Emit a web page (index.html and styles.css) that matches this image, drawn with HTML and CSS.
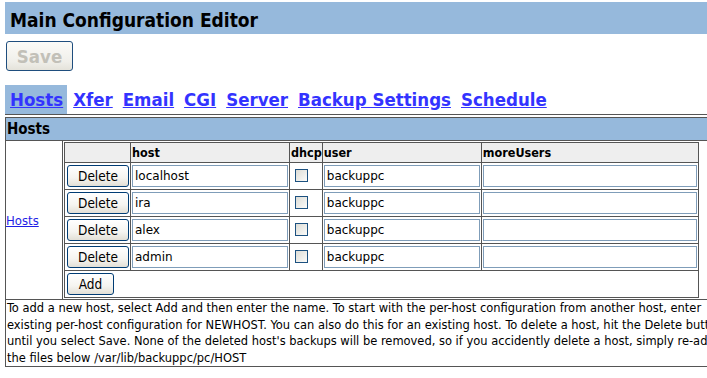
FILE: index.html
```html
<!DOCTYPE html>
<html>

<head>
  <title>Main Configuration Editor</title>
  <link rel="stylesheet" href="styles.css">
</head>

<body>
  <div class="page">
    <div class="h1">Main Configuration Editor</div>
    <form>
      <div class="save-row">
        <input type="button" class="save-btn" value="Save" disabled>
      </div>
      <div class="tabs">
        <a href="#" class="tab tab-sel">Hosts</a>
        <a href="#" class="tab">Xfer</a>
        <a href="#" class="tab">Email</a>
        <a href="#" class="tab">CGI</a>
        <a href="#" class="tab">Server</a>
        <a href="#" class="tab">Backup Settings</a>
        <a href="#" class="tab">Schedule</a>
      </div>
      <table class="edit-table">
        <tr>
          <td colspan="2" class="edit-header">Hosts</td>
        </tr>
        <tr>
          <td class="var-name"><a href="#">Hosts</a></td>
          <td class="var-value">
            <table class="hosts">
              <tr>
                <th></th>
                <th>host</th>
                <th class="col-dhcp">dhcp</th>
                <th>user</th>
                <th>moreUsers</th>
              </tr>
              <tr>
                <td><input type="button" class="btn btn-del" value="Delete"></td>
                <td><input type="text" class="txt" value="localhost"></td>
                <td class="col-dhcp"><input type="checkbox" class="chk"></td>
                <td><input type="text" class="txt" value="backuppc"></td>
                <td><input type="text" class="txt txt-wide" value=""></td>
              </tr>
              <tr>
                <td><input type="button" class="btn btn-del" value="Delete"></td>
                <td><input type="text" class="txt" value="ira"></td>
                <td class="col-dhcp"><input type="checkbox" class="chk"></td>
                <td><input type="text" class="txt" value="backuppc"></td>
                <td><input type="text" class="txt txt-wide" value=""></td>
              </tr>
              <tr>
                <td><input type="button" class="btn btn-del" value="Delete"></td>
                <td><input type="text" class="txt" value="alex"></td>
                <td class="col-dhcp"><input type="checkbox" class="chk"></td>
                <td><input type="text" class="txt" value="backuppc"></td>
                <td><input type="text" class="txt txt-wide" value=""></td>
              </tr>
              <tr>
                <td><input type="button" class="btn btn-del" value="Delete"></td>
                <td><input type="text" class="txt" value="admin"></td>
                <td class="col-dhcp"><input type="checkbox" class="chk"></td>
                <td><input type="text" class="txt" value="backuppc"></td>
                <td><input type="text" class="txt txt-wide" value=""></td>
              </tr>
              <tr>
                <td colspan="5"><input type="button" class="btn btn-add" value="Add"></td>
              </tr>
            </table>
          </td>
        </tr>
        <tr>
          <td colspan="2" class="comment">
            To add a new host, select Add and then enter the name. To start with the per-host configuration from another host, enter<br>
            existing per-host configuration for NEWHOST. You can also do this for an existing host. To delete a host, hit the Delete button. For Adds, Deletes, and configuration copy, changes don't take effect<br>
            until you select Save. None of the deleted host's backups will be removed, so if you accidently delete a host, simply re-add it. To completely remove a host's backups, you need to manually remove<br>
            the files below /var/lib/backuppc/pc/HOST
          </td>
        </tr>
      </table>
    </form>
  </div>
</body>

</html>
```

FILE: styles.css
```css
/* Editor de configuracao - estilo BackupPC */
html {
  overflow: hidden;
}

body {
  margin: 2px 0 0 5px;
  font-family: "DejaVu Sans Condensed", "DejaVu Sans", sans-serif;
  font-stretch: condensed;
  font-size: 13px;
  color: #000;
  background: #fff;
}

.page {
  width: 1100px;
}

.h1 {
  background: #96b9dc;
  height: 28px;
  padding: 4px 0 0 5px;
  font-size: 19px;
  font-weight: bold;
  line-height: 28px;
}

.save-row {
  padding: 7px 0 0 1px;
}

.save-btn {
  width: 67px;
  height: 30px;
  margin: 0;
  padding: 0;
  font-family: inherit;
  font-stretch: condensed;
  font-size: 18.5px;
  font-weight: bold;
  color: #c2c0b8;
  background: linear-gradient(#fbfbf8, #f0efea 70%, #e4e2da);
  border: 1px solid #1f4e7e;
  border-radius: 3px;
}

.tabs {
  display: flex;
  gap: 1px;
  margin-top: 14px;
  border-bottom: 1px solid #555;
}

.tab {
  padding: 0 4px 0 5px;
  height: 29px;
  line-height: 29px;
  font-size: 18.5px;
  font-weight: bold;
  color: #3333ff;
}

.tab-sel {
  background: #96b9dc;
}

.edit-table {
  width: 100%;
  margin-top: 2px;
  border-collapse: collapse;
}

.edit-header {
  background: #96b9dc;
  border: 1px solid #555;
  padding: 0 1px;
  height: 22px;
  line-height: 22px;
  font-size: 15px;
  font-weight: bold;
}

.var-name {
  width: 55px;
  border: 1px solid #555;
  padding: 0 1px 0 0;
  vertical-align: middle;
  font-size: 13px;
}

.var-name a {
  color: #1f1fe6;
}

.var-value {
  border: 1px solid #555;
  padding: 1px;
  vertical-align: top;
}

.comment {
  border: 1px solid #555;
  padding: 0 1px;
  font-size: 12.75px;
  line-height: 16.5px;
  white-space: nowrap;
}

.hosts {
  border-collapse: collapse;
  border: 1px solid #555;
}

.hosts th,
.hosts td {
  border: 1px solid #555;
  padding: 2px 1px;
}

.hosts th {
  background: #eee;
  text-align: left;
  font-size: 12.5px;
  line-height: 15px;
}

.hosts .col-dhcp {
  padding-right: 0;
}

.btn {
  display: block;
  height: 22px;
  margin: 0 0 0 1px;
  padding: 0;
  font-family: inherit;
  font-stretch: condensed;
  font-size: 13.5px;
  color: #000;
  background: linear-gradient(#ffffff, #f5f4f0 60%, #e2dfd6);
  border: 1px solid #003c74;
  border-radius: 3px;
}

.btn-del {
  width: 62px;
}

.btn-add {
  width: 47px;
}

.txt {
  display: block;
  box-sizing: border-box;
  width: 156px;
  height: 22px;
  margin: 0;
  padding: 0 2px;
  font-family: "DejaVu Sans", sans-serif;
  font-size: 12px;
  color: #000;
  border: 1px solid #7f9db9;
}

.txt-wide {
  width: 214px;
}

.chk {
  display: block;
  appearance: none;
  width: 13px;
  height: 13px;
  margin: 4px 4px 5px 4px;
  border: 1px solid #1c5180;
  background: linear-gradient(135deg, #dcdcd6, #fbfbf9);
}
```
